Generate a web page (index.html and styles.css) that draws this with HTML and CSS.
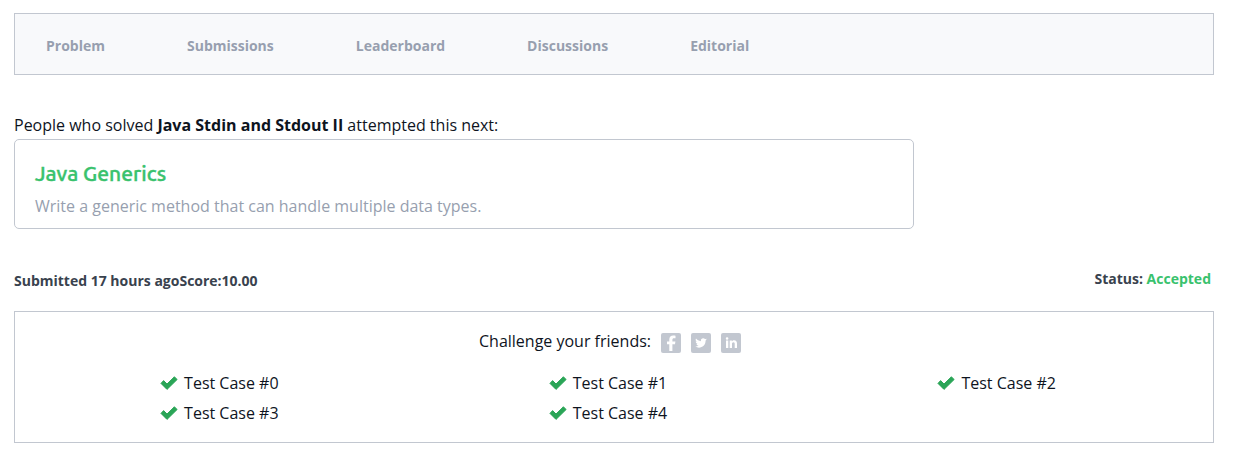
FILE: index.html
```html
<!DOCTYPE html>
<html lang="en">
<head>
<meta charset="utf-8">
<title>Java Stdin and Stdout II</title>
<link rel="stylesheet" href="styles.css">
</head>
<body>
<svg class="sprite" aria-hidden="true">
  <symbol id="check" viewBox="0 0 18 14"><path d="M1 7.4 3.6 4.6 7 8 14.4.8 17.1 3.5 7 13.4z" stroke-linejoin="round"/></symbol>
</svg>
<main class="page">
  <nav class="tabs">
    <a href="#">Problem</a>
    <a href="#">Submissions</a>
    <a href="#">Leaderboard</a>
    <a href="#">Discussions</a>
    <a href="#">Editorial</a>
  </nav>
  <section class="next">
    <p class="next-intro">People who solved <strong>Java Stdin and Stdout II</strong> attempted this next:</p>
    <div class="card">
      <h2 class="card-title"><a href="#">Java Generics</a></h2>
      <p class="card-text">Write a generic method that can handle multiple data types.</p>
    </div>
  </section>
  <div class="summary">
    <p class="submitted">Submitted 17 hours agoScore:10.00</p>
    <p class="status">Status: <span class="accepted">Accepted</span></p>
  </div>
  <section class="results">
    <div class="share">
      <span>Challenge your friends:</span>
      <a class="social" href="#" aria-label="Facebook"><svg viewBox="0 0 20 20"><path d="M8.300 18v-6.700H6V8.400h2.300V6.500C8.300 3.800 9.800 2.500 12.200 2.500c1 0 1.800.1 2.300.2v2.600h-1.500c-1.200 0-1.600.6-1.600 1.500v1.600h3l-.4 2.900h-2.600V18z"/></svg></a>
      <a class="social" href="#" aria-label="Twitter"><svg viewBox="0 0 20 20"><path d="M15.800 6.300c-.4.2-.9.400-1.300.4.500-.3.800-.7 1-1.300-.5.300-1 .5-1.500.6A2.400 2.400 0 0 0 9.900 8.200C7.900 8.100 6.200 7.100 5 5.600c-.7 1.100-.3 2.500.7 3.200-.4 0-.7-.1-1-.3 0 1.200.8 2.100 1.900 2.400-.4.100-.7.100-1.100 0 .3 1 1.200 1.600 2.200 1.700-1 .8-2.200 1.100-3.500 1 4.600 2.900 10.500-.100 10.400-6 .5-.3.900-.8 1.200-1.300z"/></svg></a>
      <a class="social" href="#" aria-label="LinkedIn"><svg viewBox="0 0 20 20"><path d="M5 7.500h2.300V15H5zM6.100 4.200a1.300 1.300 0 1 1 0 2.600 1.300 1.300 0 0 1 0-2.600zM8.700 7.500h2.200v1c.4-.7 1.200-1.200 2.200-1.200 2.100 0 2.900 1.300 2.900 3.400V15h-2.300v-3.900c0-1.100-.3-1.800-1.200-1.800-1.100 0-1.500.8-1.500 1.800V15H8.700z"/></svg></a>
    </div>
    <ul class="cases">
      <li><svg class="tick"><use href="#check"/></svg>Test Case #0</li>
      <li><svg class="tick"><use href="#check"/></svg>Test Case #1</li>
      <li><svg class="tick"><use href="#check"/></svg>Test Case #2</li>
      <li><svg class="tick"><use href="#check"/></svg>Test Case #3</li>
      <li><svg class="tick"><use href="#check"/></svg>Test Case #4</li>
    </ul>
  </section>
</main>
</body>
</html>
```

FILE: styles.css
```css
* { box-sizing: border-box; }

body {
  margin: 0;
  background: #fff;
  color: #0e141e;
  font: 16px/24px "Open Sans", "Noto Sans", sans-serif;
}

p, h2, ul { margin: 0; padding: 0; }
a { color: inherit; text-decoration: none; }

.sprite { display: none; }

.page { padding: 13px 33px 30px 14px; }

.tabs {
  display: flex;
  flex-wrap: wrap;
  gap: 0 82px;
  padding: 22px 31px 18px;
  border: 1px solid #c2c7d0;
  background: #f8f9fb;
  color: #979faf;
  font-size: 14px;
  line-height: 20px;
  font-weight: 700;
}

.next { margin-top: 38px; }
.next-intro { padding-bottom: 2px; }

.card {
  max-width: 900px;
  padding: 20px 20px 8px;
  border: 1px solid #c2c7d0;
  border-radius: 5px;
}

.card-title {
  color: #39c26d;
  font: 500 21px/26px Ubuntu, "Noto Sans", sans-serif;
  -webkit-text-stroke: 0.4px;
}

.card-text {
  margin-top: 6px;
  line-height: 28px;
  color: #979faf;
}

.summary {
  display: flex;
  justify-content: space-between;
  margin-top: 40px;
  padding-right: 3px;
  color: #39424e;
  font-size: 14px;
  line-height: 20px;
  font-weight: 700;
}
.submitted { padding-top: 2px; }
.accepted { color: #39c26d; }

.results {
  margin-top: 20px;
  padding: 16px 16px 14px;
  border: 1px solid #c2c7d0;
}

.share {
  display: flex;
  justify-content: center;
  gap: 10px;
  padding-right: 8px;
  line-height: 26px;
}

.social {
  width: 20px;
  height: 20px;
  margin-top: 5px;
  border-radius: 2px;
  background: #c2c7d0;
}
.social svg { display: block; width: 100%; height: 100%; fill: #fff; }

.cases {
  display: grid;
  grid-template-columns: repeat(3, 1fr);
  margin-top: 14px;
  list-style: none;
  line-height: 30px;
}
.cases li {
  display: flex;
  justify-content: center;
  align-items: center;
  gap: 6px;
  padding-right: 12px;
}

.tick { width: 18px; height: 14px; fill: #2aa557; stroke: #2aa557; }
```
